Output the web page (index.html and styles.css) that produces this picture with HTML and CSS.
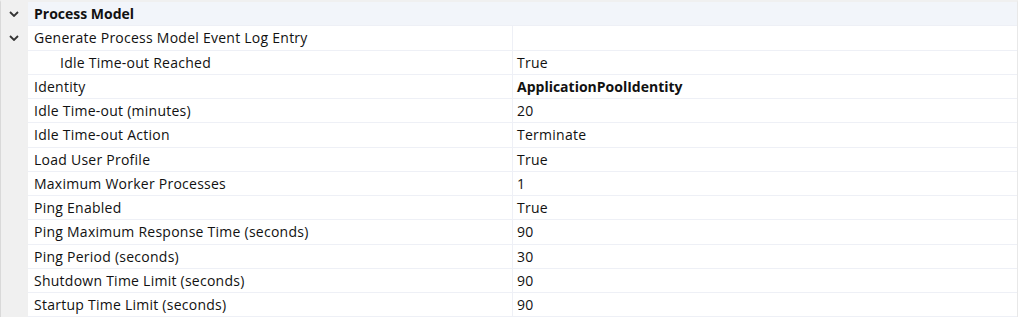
FILE: index.html
```html
<!DOCTYPE html>
<html lang="en">

<head>
	<meta charset="UTF-8">
	<title>Process Model</title>
	<link rel="stylesheet" href="styles.css">
</head>

<body>
	<div class="grid">
		<div class="row category">
			<div class="gutter"><svg class="chevron" viewBox="0 0 10 6"><path d="M1 1 L5 5 L9 1" /></svg></div>
			<div class="name">Process Model</div>
			<div class="value"></div>
		</div>
		<div class="row">
			<div class="gutter"><svg class="chevron" viewBox="0 0 10 6"><path d="M1 1 L5 5 L9 1" /></svg></div>
			<div class="name">Generate Process Model Event Log Entry</div>
			<div class="value"></div>
		</div>
		<div class="row">
			<div class="gutter"></div>
			<div class="name child">Idle Time-out Reached</div>
			<div class="value">True</div>
		</div>
		<div class="row">
			<div class="gutter"></div>
			<div class="name">Identity</div>
			<div class="value bold">ApplicationPoolIdentity</div>
		</div>
		<div class="row">
			<div class="gutter"></div>
			<div class="name">Idle Time-out (minutes)</div>
			<div class="value">20</div>
		</div>
		<div class="row">
			<div class="gutter"></div>
			<div class="name">Idle Time-out Action</div>
			<div class="value">Terminate</div>
		</div>
		<div class="row">
			<div class="gutter"></div>
			<div class="name">Load User Profile</div>
			<div class="value">True</div>
		</div>
		<div class="row">
			<div class="gutter"></div>
			<div class="name">Maximum Worker Processes</div>
			<div class="value">1</div>
		</div>
		<div class="row">
			<div class="gutter"></div>
			<div class="name">Ping Enabled</div>
			<div class="value">True</div>
		</div>
		<div class="row">
			<div class="gutter"></div>
			<div class="name">Ping Maximum Response Time (seconds)</div>
			<div class="value">90</div>
		</div>
		<div class="row">
			<div class="gutter"></div>
			<div class="name">Ping Period (seconds)</div>
			<div class="value">30</div>
		</div>
		<div class="row">
			<div class="gutter"></div>
			<div class="name">Shutdown Time Limit (seconds)</div>
			<div class="value">90</div>
		</div>
		<div class="row">
			<div class="gutter"></div>
			<div class="name">Startup Time Limit (seconds)</div>
			<div class="value">90</div>
		</div>
	</div>
</body>

</html>
```

FILE: styles.css
```css
:root {
	--row-height: 23.25px;
	--gutter-color: #f0f0f0;
	--line-color: #eef0f6;
	--category-color: #f2f5fa;
	--text-color: #111;
}

body {
	margin: 0;
	padding: 0;
	background-color: #fff;
	font-family: "Open Sans", "Noto Sans", sans-serif;
	font-size: 14px;
	letter-spacing: 0.25px;
	color: var(--text-color);
}

.grid {
	width: 1018px;
	border-top: 2px solid #f0f0f0;
	border-left: 1px solid #d9d9d9;
	border-right: 1px solid #e8e8e8;
	box-sizing: border-box;
}

.row {
	display: flex;
	height: var(--row-height);
	border-bottom: 1px solid var(--line-color);
}

.gutter {
	width: 27px;
	flex: none;
	background-color: var(--gutter-color);
	display: flex;
	align-items: center;
	justify-content: center;
	/* gutter sits over the row line */
	margin-bottom: -1px;
}

.chevron {
	width: 10px;
	height: 6px;
	margin-right: 2px;
	fill: none;
	stroke: #333;
	stroke-width: 1.8;
}

.name {
	width: 478px;
	flex: none;
	padding-left: 6px;
	display: flex;
	align-items: center;
	border-right: 1px solid var(--line-color);
}

.name.child {
	padding-left: 32px;
	width: 452px;
}

.value {
	flex: 1;
	padding-left: 4px;
	display: flex;
	align-items: center;
}

.bold {
	font-weight: bold;
	letter-spacing: 0;
}

.category {
	background-color: var(--category-color);
}

.category .name {
	font-weight: bold;
	letter-spacing: 0;
	border-right: none;
}
```
